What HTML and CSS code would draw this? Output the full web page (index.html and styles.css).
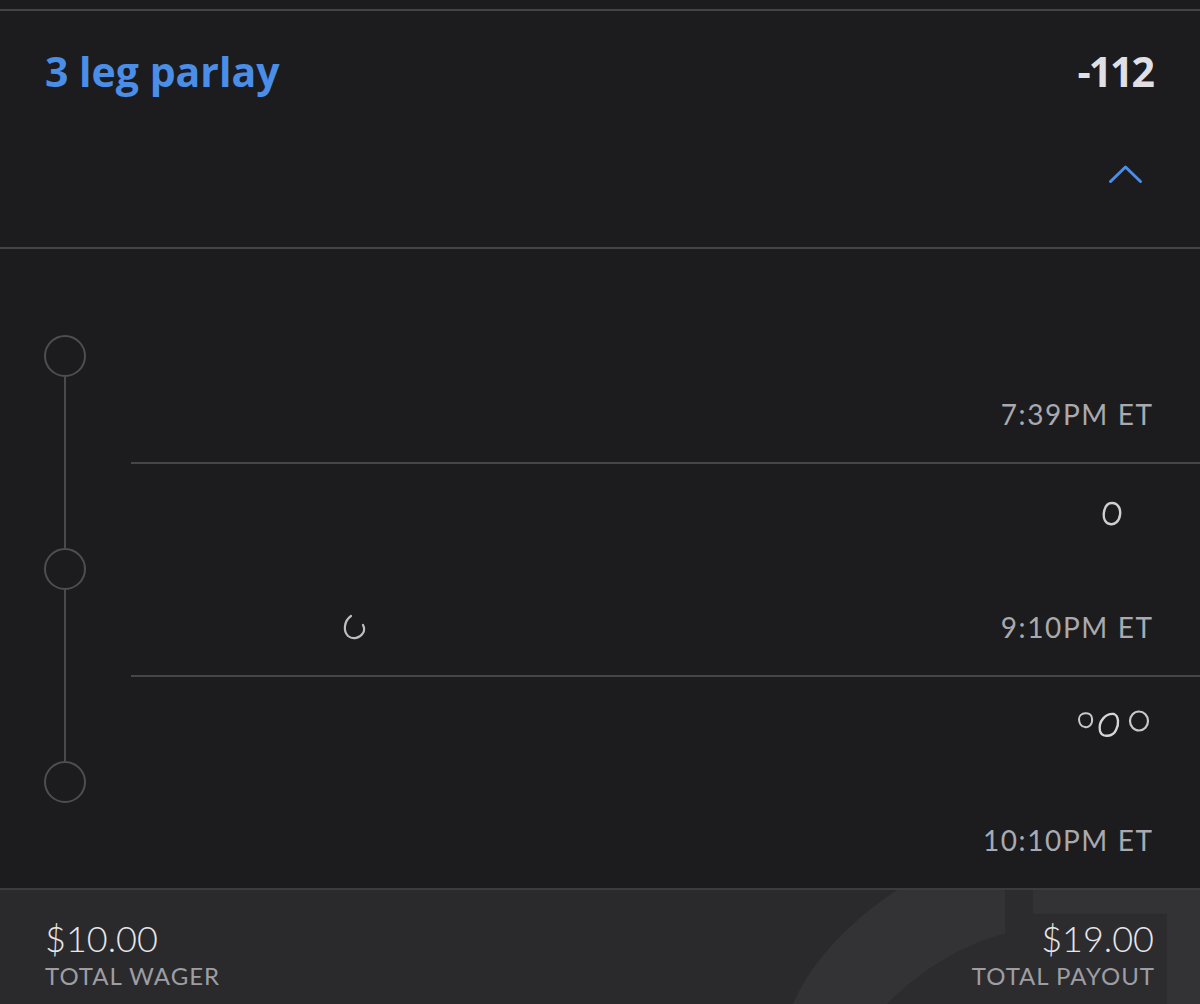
FILE: index.html
```html
<!DOCTYPE html>
<html lang="en">
<head>
<meta charset="utf-8">
<title>3 leg parlay</title>
<link rel="stylesheet" href="styles.css">
</head>
<body>
<div class="card">
  <div class="topbar"></div>
  <header class="header">
    <div class="title-row">
      <span class="title">3 leg parlay</span>
      <span class="odds">-112</span>
    </div>
    <div class="chevron-row">
      <svg class="chevron" width="35" height="20" viewBox="0 0 35 20"><path d="M2.5 17.5 L17.5 3 L32.5 17.5" fill="none" stroke="#4a8ee8" stroke-width="3" stroke-linecap="round" stroke-linejoin="round"/></svg>
    </div>
  </header>

  <section class="legs">
    <div class="leg leg-first">
      <div class="rail"><span class="seg seg-top"></span><span class="node"></span><span class="seg seg-bottom"></span></div>
      <div class="leg-body">
        <div class="leg-mark"></div>
        <div class="time-row"><span class="time">7:39PM ET</span></div>
      </div>
    </div>
    <div class="leg">
      <div class="rail"><span class="seg seg-top"></span><span class="node"></span><span class="seg seg-bottom"></span></div>
      <div class="leg-body sep">
        <div class="leg-mark mark-single">
          <svg width="24" height="28" viewBox="0 0 24 28"><path d="M12 3 C18 3 21 9 20 15 C19 22 14 25 10 24 C5 23 3 18 4 12 C5 6 8 3 12 3 Z" fill="none" stroke="#cfcfd3" stroke-width="2.4"/></svg>
        </div>
        <div class="time-row">
          <svg class="arc" width="30" height="32" viewBox="0 0 30 32"><path d="M12 5 C5 10 4 20 9 25 C14 29 21 27 24 22 C26 19 25 16 24 14" fill="none" stroke="#bdbdc2" stroke-width="2.2" stroke-linecap="round"/></svg>
          <span class="time">9:10PM ET</span>
        </div>
      </div>
    </div>
    <div class="leg leg-last">
      <div class="rail"><span class="seg seg-top"></span><span class="node"></span><span class="seg seg-bottom"></span></div>
      <div class="leg-body sep">
        <div class="leg-mark mark-triple">
          <svg width="76" height="32" viewBox="0 0 76 32"><path d="M3 11 C3 4 15 3 16 10 C17 16 13 20 9 19 C5 19 3 15 3 11 Z" fill="none" stroke="#c8c8cc" stroke-width="2"/><path d="M24 23 C22 13 30 5 38 6 C43 8 43 17 40 22 C37 29 26 30 24 23 Z" fill="none" stroke="#d6d6da" stroke-width="2.4"/><ellipse cx="63" cy="13" rx="9" ry="9.5" fill="none" stroke="#c8c8cc" stroke-width="2.2"/></svg>
        </div>
        <div class="time-row"><span class="time">10:10PM ET</span></div>
      </div>
    </div>
  </section>

  <footer class="footer">
    <svg class="watermark" viewBox="0 0 1200 115" preserveAspectRatio="none" aria-hidden="true">
      <path d="M793 115 C812 70 852 30 897 0 L1200 0 L1200 115 Z" fill="#333336"/>
      <path d="M887 115 C920 82 960 56 1005 44 L1005 0 L1033 0 L1033 24 L1167 24 L1167 115 Z" fill="#2c2c2f"/>
    </svg>
    <div class="total">
      <span class="amount">$10.00</span>
      <span class="label">TOTAL WAGER</span>
    </div>
    <div class="total total-right">
      <span class="amount">$19.00</span>
      <span class="label">TOTAL PAYOUT</span>
    </div>
  </footer>
</div>
</body>
</html>
```
FILE: styles.css
```css
* { box-sizing: border-box; }
html, body { margin: 0; padding: 0; }
body {
  background: #1c1c1e;
  font-family: "Lato", "Open Sans", sans-serif;
  width: 1200px;
  height: 1004px;
  overflow: hidden;
}
.card {
  display: flex;
  flex-direction: column;
  height: 1004px;
}
.topbar {
  height: 11px;
  border-bottom: 2px solid #444446;
}
.header {
  height: 238px;
  padding: 40px 47px 0 45px;
  border-bottom: 2px solid #444446;
}
.title-row {
  display: flex;
  justify-content: space-between;
  align-items: baseline;
}
.title {
  font-family: "Open Sans", sans-serif;
  font-weight: 700;
  font-size: 41px;
  line-height: 1;
  color: #4a8ee8;
}
.odds {
  font-family: "Open Sans", sans-serif;
  font-weight: 700;
  font-size: 41px;
  line-height: 1;
  color: #dfdfe4;
  letter-spacing: -2px;
}
.chevron-row {
  display: flex;
  justify-content: flex-end;
  margin-top: 72px;
  padding-right: 10px;
}
.chevron { display: block; }

.legs {
  display: flex;
  flex-direction: column;
}
.leg {
  display: grid;
  grid-template-columns: 131px 1fr;
  height: 213px;
}
.rail {
  display: flex;
  flex-direction: column;
  align-items: center;
  width: 130px;
}
.seg {
  width: 2px;
  background: #4a4a4c;
}
.seg-top { height: 86px; }
.seg-bottom { flex: 1; }
.leg-first .seg-top,
.leg-last .seg-bottom { background: transparent; }
.node {
  width: 42px;
  height: 42px;
  border: 2px solid #4e4e50;
  border-radius: 50%;
  flex: none;
}
.leg-body {
  display: flex;
  flex-direction: column;
  justify-content: space-between;
  padding: 0 48px 34px 0;
}
.leg-body.sep {
  border-top: 2px solid #464648;
}
.leg-mark {
  display: flex;
  justify-content: flex-end;
}
.mark-single {
  padding-top: 36px;
  padding-right: 28px;
}
.mark-triple {
  padding-top: 31px;
  padding-right: 0;
}
.time-row {
  display: flex;
  justify-content: flex-end;
  align-items: flex-end;
}
.arc {
  display: block;
  margin-right: auto;
  margin-left: 208px;
  margin-bottom: -2px;
}
.time {
  font-size: 28px;
  line-height: 1;
  letter-spacing: 1.6px;
  margin-right: -1.6px;
  color: #a9a9ae;
}

.footer {
  position: relative;
  flex: 1;
  display: flex;
  justify-content: space-between;
  align-items: flex-start;
  padding: 30px 46px 0 45px;
  background: #2a2a2c;
  border-top: 2px solid #3c3c3e;
  overflow: hidden;
}
.watermark {
  position: absolute;
  left: 0;
  top: 0;
  width: 100%;
  height: 100%;
}
.total {
  position: relative;
  display: flex;
  flex-direction: column;
  gap: 8px;
}
.total-right { align-items: flex-end; }
.amount {
  font-size: 36px;
  font-weight: 300;
  line-height: 1;
  color: #e6e6ea;
}
.label {
  font-size: 24px;
  line-height: 1;
  letter-spacing: 1px;
  margin-right: -1px;
  color: #9d9da2;
}
```
